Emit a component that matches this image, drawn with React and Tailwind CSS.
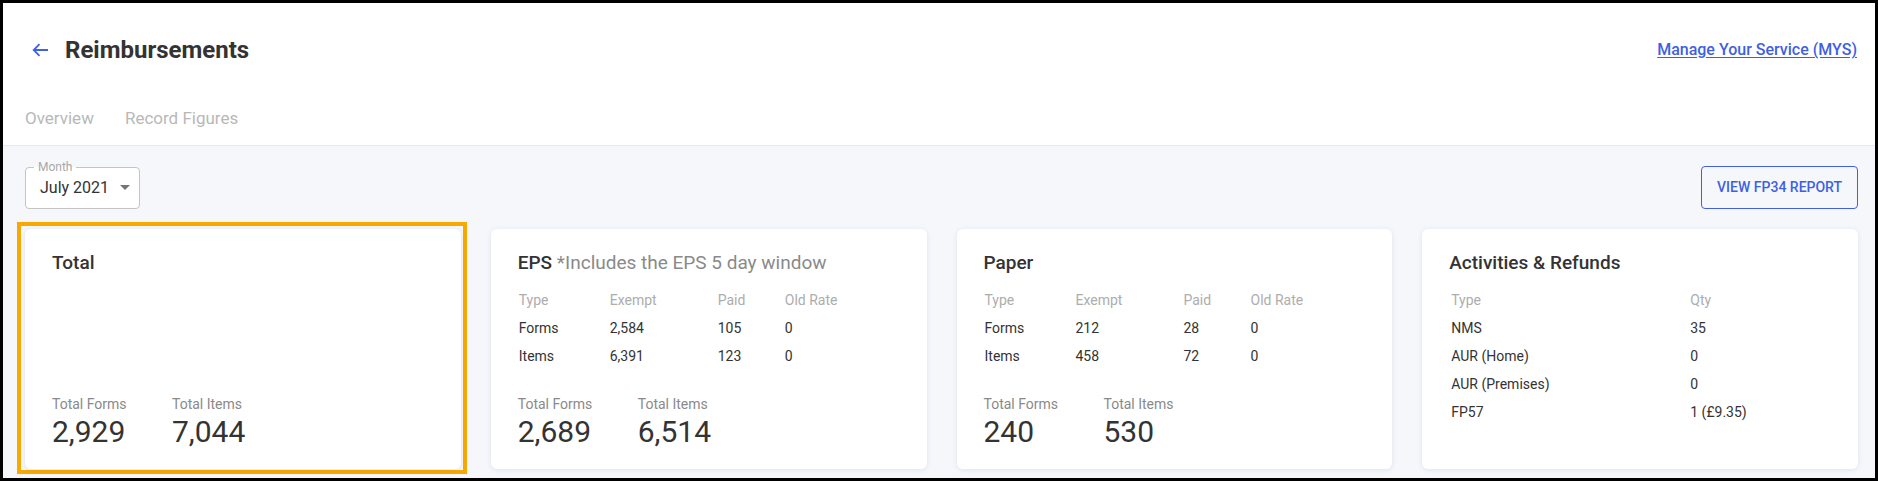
import React from "react";

const EPS_ROWS = [
    { type: "Forms", exempt: "2,584", paid: "105", old: "0" },
    { type: "Items", exempt: "6,391", paid: "123", old: "0" },
];

const PAPER_ROWS = [
    { type: "Forms", exempt: "212", paid: "28", old: "0" },
    { type: "Items", exempt: "458", paid: "72", old: "0" },
];

const ACTIVITIES = [
    { type: "NMS", qty: "35" },
    { type: "AUR (Home)", qty: "0" },
    { type: "AUR (Premises)", qty: "0" },
    { type: "FP57", qty: "1 (£9.35)" },
];

function BackArrow() {
    return (
        <svg width="17" height="14" viewBox="0 0 17 14" fill="none" className="shrink-0">
            <path d="M16 7H2 M7.5 1.2L1.7 7l5.8 5.8" stroke="#3f60e4" strokeWidth="1.8" />
        </svg>
    );
}

function Totals({ forms, items }) {
    return (
        <div className="mt-auto flex">
            <div className="w-[120px]">
                <p className="text-[14px] leading-5 text-[#8a8a8a]">Total Forms</p>
                <p className="text-[30px] leading-[36px] text-[#333]">{forms}</p>
            </div>
            <div>
                <p className="text-[14px] leading-5 text-[#8a8a8a]">Total Items</p>
                <p className="text-[30px] leading-[36px] text-[#333]">{items}</p>
            </div>
        </div>
    );
}

function Card({ children, highlight }) {
    return (
        <div className="relative h-[240px]">
            {highlight && (
                <span className="pointer-events-none absolute -left-2 -top-[7px] -right-[6px] -bottom-[5px] border-4 border-[#f7a900]" />
            )}
            <div className="relative h-full flex flex-col bg-white rounded-md shadow-[0_1px_5px_rgba(60,80,130,0.12)] px-[27px] pt-5 pb-[19px]">
                {children}
            </div>
        </div>
    );
}

function CountTable({ rows }) {
    return (
        <div className="mt-[9px] pl-px text-[14px]">
            <div className="grid grid-cols-[91px_108px_67px_auto] h-7 items-center text-[#adadad]">
                <span>Type</span>
                <span>Exempt</span>
                <span>Paid</span>
                <span>Old Rate</span>
            </div>
            {rows.map((row) => (
                <div key={row.type} className="grid grid-cols-[91px_108px_67px_auto] h-7 items-center text-[#333]">
                    <span>{row.type}</span>
                    <span>{row.exempt}</span>
                    <span>{row.paid}</span>
                    <span>{row.old}</span>
                </div>
            ))}
        </div>
    );
}

export default function App() {
    return (
        <div className="h-[481px] overflow-hidden border-[3px] border-black bg-[#f5f7fb] font-['Roboto',sans-serif]">
            <header className="bg-white border-b border-[#e5e9f0] h-[143px]">
                <div className="flex items-center justify-between pl-[29px] pr-[18px] pt-[29px] h-[65px]">
                    <div className="flex items-center gap-[16px]">
                        <BackArrow />
                        <h1 className="text-[24px] leading-9 font-bold text-[#333]">Reimbursements</h1>
                    </div>
                    <a href="#" className="text-[16px] font-medium text-[#3f5fe3] underline underline-offset-2">
                        Manage Your Service (MYS)
                    </a>
                </div>
                <nav className="flex gap-[31px] pl-[22px] mt-[39px] h-6 items-center text-[17px] text-[#b8b8b8]">
                    <span>Overview</span>
                    <span>Record Figures</span>
                </nav>
            </header>

            <main className="pl-[22px] pr-[17px] pt-5">
                <div className="flex items-center justify-between h-[43px]">
                    <div className="relative flex items-center w-[115px] h-[42px] rounded-[4px] border border-[#c4c4c4] bg-white pl-[14px]">
                        <span className="absolute -top-[9px] left-[8px] px-[4px] text-[12px] leading-4 text-[#a8a8a8] bg-[linear-gradient(to_bottom,#f5f7fb_50%,#fff_50%)]">
                            Month
                        </span>
                        <span className="text-[16px] text-[#333]">July 2021</span>
                        <span className="ml-[11px] w-0 h-0 border-l-[5px] border-r-[5px] border-t-[5px] border-l-transparent border-r-transparent border-t-[#757575]" />
                    </div>
                    <button className="h-[43px] px-[15px] rounded-[4px] border border-[#3f60e4] text-[14px] font-medium text-[#3f5fe3] uppercase">
                        View FP34 Report
                    </button>
                </div>

                <div className="grid grid-cols-4 gap-[30px] mt-5">
                    <Card highlight>
                        <h2 className="text-[19px] leading-7 font-medium text-[#333]">Total</h2>
                        <Totals forms="2,929" items="7,044" />
                    </Card>

                    <Card>
                        <h2 className="text-[19px] leading-7 text-[#8a8a8a]">
                            <span className="font-medium text-[#333]">EPS</span> *Includes the EPS 5 day window
                        </h2>
                        <CountTable rows={EPS_ROWS} />
                        <Totals forms="2,689" items="6,514" />
                    </Card>

                    <Card>
                        <h2 className="text-[19px] leading-7 font-medium text-[#333]">Paper</h2>
                        <CountTable rows={PAPER_ROWS} />
                        <Totals forms="240" items="530" />
                    </Card>

                    <Card>
                        <h2 className="text-[19px] leading-7 font-medium text-[#333]">Activities &amp; Refunds</h2>
                        <div className="mt-[9px] pl-[2px] text-[14px]">
                            <div className="grid grid-cols-[239px_auto] h-7 items-center text-[#adadad]">
                                <span>Type</span>
                                <span>Qty</span>
                            </div>
                            {ACTIVITIES.map((row) => (
                                <div key={row.type} className="grid grid-cols-[239px_auto] h-7 items-center text-[#333]">
                                    <span>{row.type}</span>
                                    <span>{row.qty}</span>
                                </div>
                            ))}
                        </div>
                    </Card>
                </div>
            </main>
        </div>
    );
}
